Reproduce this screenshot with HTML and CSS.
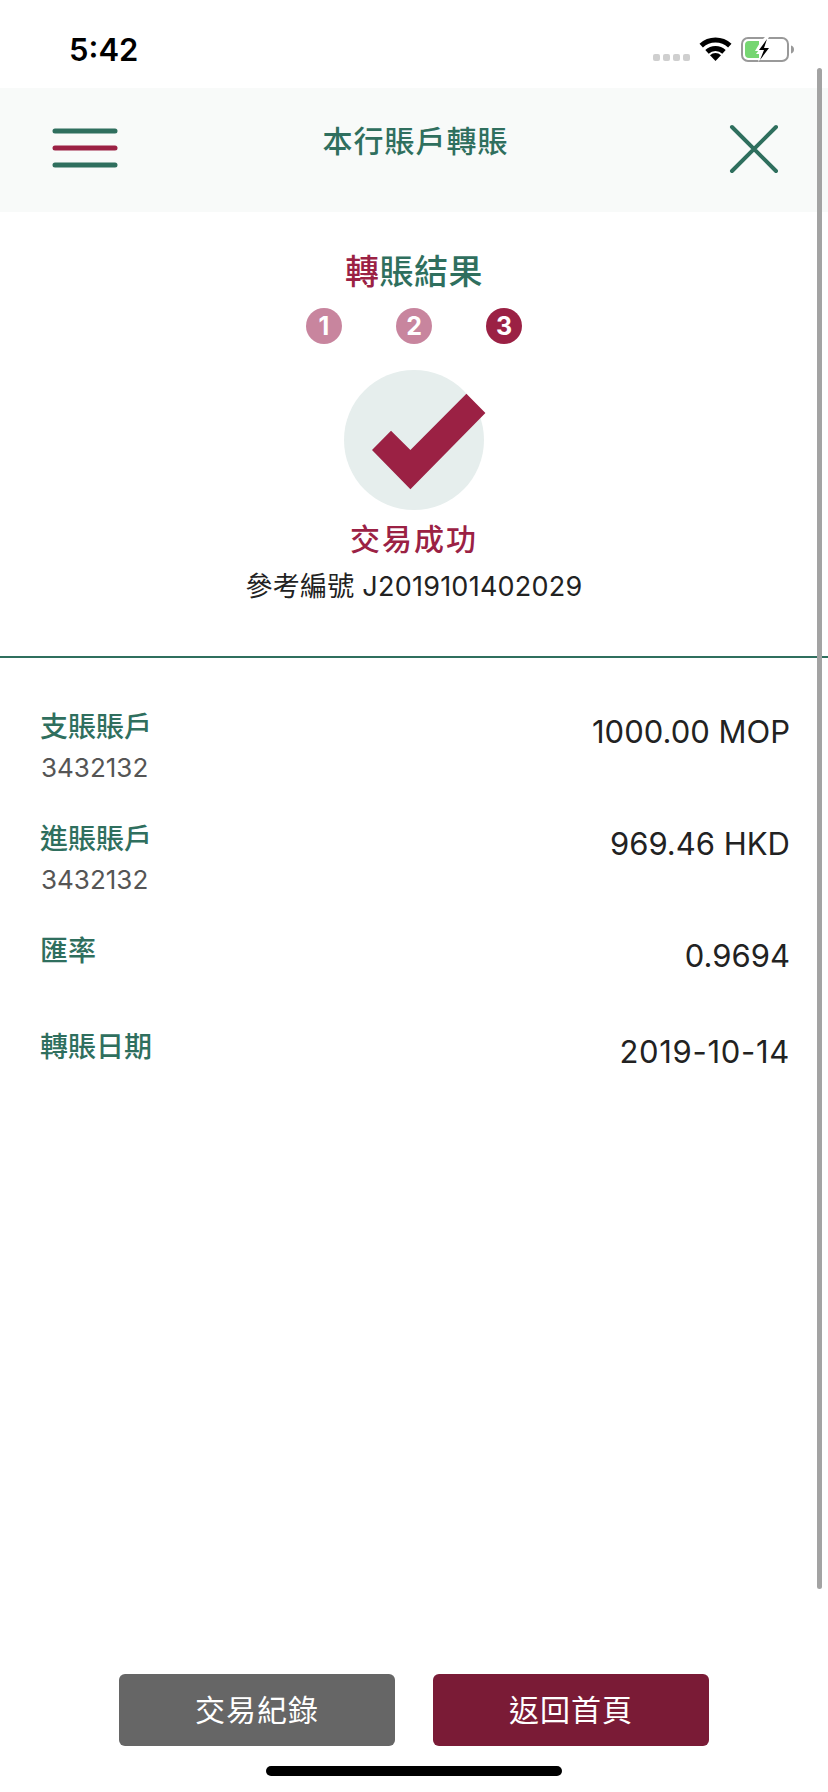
FILE: index.html
```html
<!DOCTYPE html>
<html lang="zh-Hant">
<head>
<meta charset="utf-8">
<title>本行賬戶轉賬</title>
<link rel="stylesheet" href="styles.css">
</head>
<body>
<div class="page">
  <div class="status">
    <span class="time">5:42</span>
    <div class="status-icons">
      <div class="signal"><i></i><i></i><i></i><i></i></div>
      <svg class="wifi" viewBox="0 0 33 24" width="33" height="24">
        <path class="wifi-arc" d="M2.200 8.600A21 21 0 0 1 30.800 8.600"/>
        <path class="wifi-arc" d="M8 14.900A12.500 12.500 0 0 1 25 14.900"/>
        <path class="wifi-dot" d="M16.500 24L11 18.300A8 8 0 0 1 22 18.300Z"/>
      </svg>
      <svg class="battery" viewBox="0 0 53 25" width="53" height="25">
        <rect x="1" y="1" width="46" height="23" rx="6" fill="none" stroke="#999" stroke-width="2"/>
        <path d="M4 8a4 4 0 0 1 4-4h10v9l-3 4 3 0v4H8a4 4 0 0 1-4-4Z" fill="#76d672"/>
        <path d="M24 0 h4 L22 11 h7 L17 25 L20 14 h-6 L20 4 Z" fill="#fff"/>
        <path d="M26 2 L18 13 h5 L19 23 L28 11 h-5 Z" fill="#000"/>
        <path d="M50 8.500c2 .5 3 2 3 4s-1 3.500-3 4Z" fill="#999"/>
      </svg>
    </div>
  </div>

  <header class="nav">
    <svg class="menu-icon" viewBox="0 0 66 40" width="66" height="40">
      <path d="M3 3H63M3 37H63" stroke="#2f6f5e" stroke-width="5" stroke-linecap="round"/>
      <path d="M3 20H63" stroke="#9b2144" stroke-width="5" stroke-linecap="round"/>
    </svg>
    <h1 class="nav-title">本行賬戶轉賬</h1>
    <svg class="close-icon" viewBox="0 0 50 50" width="50" height="50">
      <path d="M3 3L47 47M47 3L3 47" stroke="#2f6f5e" stroke-width="4" stroke-linecap="round"/>
    </svg>
  </header>

  <section class="result">
    <h2 class="result-title"><span class="accent">轉</span>賬結果</h2>
    <div class="steps">
      <span class="step done">1</span>
      <span class="step done">2</span>
      <span class="step current">3</span>
    </div>
    <div class="badge">
      <svg class="tick" viewBox="0 0 114 97" width="114" height="97">
        <path d="M94.400 0.700L113.400 20L38.400 96.300L0 57L19 37.700L38.400 57Z" fill="#9b2144"/>
      </svg>
    </div>
    <p class="result-state">交易成功</p>
    <p class="result-ref">參考編號 J2019101402029</p>
  </section>

  <section class="details">
    <div class="row">
      <div class="row-label">
        <span class="label">支賬賬戶</span>
        <span class="sub">3432132</span>
      </div>
      <span class="value">1000.00 MOP</span>
    </div>
    <div class="row">
      <div class="row-label">
        <span class="label">進賬賬戶</span>
        <span class="sub">3432132</span>
      </div>
      <span class="value">969.46 HKD</span>
    </div>
    <div class="row short">
      <div class="row-label"><span class="label">匯率</span></div>
      <span class="value">0.9694</span>
    </div>
    <div class="row short">
      <div class="row-label"><span class="label">轉賬日期</span></div>
      <span class="value date">2019-10-14</span>
    </div>
  </section>

  <footer class="actions">
    <button class="btn btn-gray">交易紀錄</button>
    <button class="btn btn-red">返回首頁</button>
  </footer>

  <div class="scrollbar"></div>
  <div class="home-bar"></div>
</div>
</body>
</html>
```

FILE: styles.css
```css
* { box-sizing: border-box; }
html, body { margin: 0; padding: 0; background: #fff; }
body { font-family: Inter, "Noto Sans CJK TC", sans-serif; color: #222; }
h1, h2, p { margin: 0; font-weight: 400; }

.page {
  position: relative;
  width: 828px;
  height: 1792px;
  overflow: hidden;
  display: flex;
  flex-direction: column;
}

.status {
  height: 88px;
  flex: none;
  display: flex;
  justify-content: space-between;
  align-items: flex-start;
  padding: 0 34px 0 69px;
}
.time {
  margin-top: 30px;
  font-size: 31px;
  line-height: 39px;
  font-weight: 600;
  color: #000;
}
.status-icons {
  margin-top: 37px;
  display: flex;
  align-items: flex-start;
}
.signal { display: flex; gap: 3px; margin-top: 17px; margin-right: 9px; }
.signal i { width: 7px; height: 7px; border-radius: 2px; background: #cfcfcf; }
.wifi { display: block; margin-right: 9px; }
.wifi-arc { fill: none; stroke: #000; stroke-width: 5; }
.wifi-dot { fill: #000; }
.battery { display: block; }

.nav {
  height: 124px;
  flex: none;
  background: #f8faf9;
  display: grid;
  grid-template-columns: 1fr auto 1fr;
  align-items: center;
  padding: 0 49px 0 52px;
}
.menu-icon { display: block; margin-top: -4px; }
.close-icon { display: block; justify-self: end; margin-top: -2px; }
.nav-title {
  font-size: 30px;
  line-height: 40px;
  letter-spacing: 1px;
  font-weight: 500;
  color: #2f6f5e;
  margin-top: -19px;
}

.result {
  height: 446px;
  flex: none;
  border-bottom: 2px solid #2f6f5e;
  display: flex;
  flex-direction: column;
  align-items: center;
}
.result-title {
  margin-top: 35px;
  font-size: 34px;
  line-height: 50px;
  letter-spacing: 0.5px;
  font-weight: 500;
  color: #2f6f5e;
}
.accent { color: #9b2144; }
.steps { margin-top: 11px; display: flex; gap: 54px; }
.step {
  width: 36px;
  height: 36px;
  border-radius: 50%;
  display: flex;
  align-items: center;
  justify-content: center;
  color: #fff;
  font-size: 25px;
  font-weight: 700;
}
.step.done { background: #c8859e; }
.step.current { background: #9b2144; }

.badge {
  position: relative;
  margin-top: 26px;
  width: 140px;
  height: 140px;
  border-radius: 50%;
  background: #e6eeed;
}
.tick { position: absolute; left: 28px; top: 23px; }

.result-state {
  margin-top: 9px;
  font-size: 30px;
  line-height: 40px;
  font-weight: 500;
  letter-spacing: 2px;
  color: #9b2144;
}
.result-ref {
  margin-top: 10px;
  font-size: 27px;
  line-height: 36px;
  letter-spacing: 0.25px;
  color: #222;
}

.details { padding: 51px 38px 0 40px; }
.row {
  height: 112px;
  display: flex;
  justify-content: space-between;
  align-items: flex-start;
}
.row.short { height: 96px; }
.row-label { display: flex; flex-direction: column; padding-top: 1px; }
.label {
  font-size: 28px;
  line-height: 34px;
  font-weight: 500;
  color: #2f6f5e;
}
.sub {
  margin-top: 9px;
  margin-left: 1px;
  font-size: 26px;
  line-height: 30px;
  color: #555;
}
.value {
  margin-top: 4px;
  font-size: 31px;
  line-height: 38px;
  color: #222;
}
.value.date { letter-spacing: 0.7px; }

.actions {
  margin-top: auto;
  margin-bottom: 46px;
  display: flex;
  justify-content: center;
  gap: 38px;
}
.btn {
  width: 276px;
  height: 72px;
  border: 0;
  border-radius: 6px;
  padding: 0 0 4px;
  color: #fff;
  font-family: inherit;
  font-size: 30px;
  font-weight: 400;
  letter-spacing: 1px;
}
.btn-gray { background: #666; }
.btn-red { background: #7a1b36; }

.scrollbar {
  position: absolute;
  left: 817px;
  top: 68px;
  width: 5px;
  height: 1521px;
  border-radius: 3px;
  background: #a3a3a3;
}
.home-bar {
  position: absolute;
  left: 266px;
  top: 1766px;
  width: 296px;
  height: 10px;
  border-radius: 5px;
  background: #000;
}
```
